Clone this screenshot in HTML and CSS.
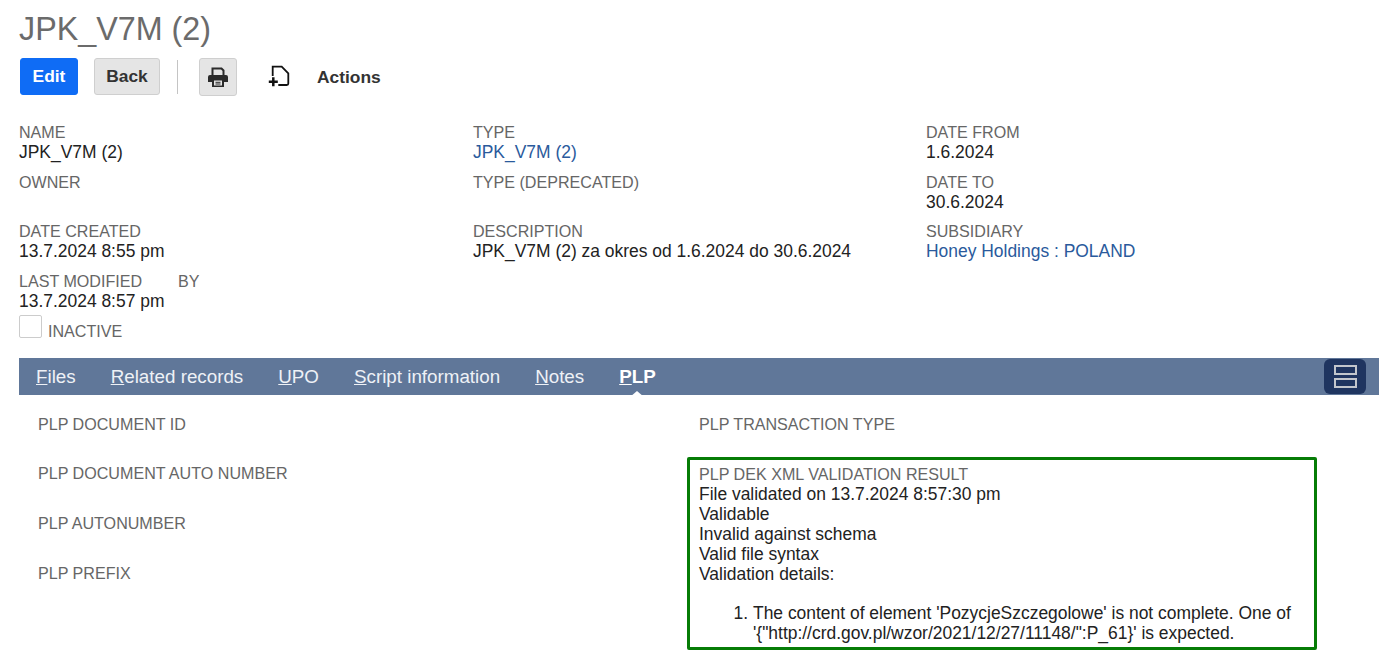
FILE: index.html
```html
<!DOCTYPE html>
<html lang="pl">
<head>
<meta charset="UTF-8" />
<meta name="viewport" content="width=device-width, initial-scale=1" />
<title>JPK_V7M (2)</title>
<link rel="stylesheet" href="styles.css">
</head>
<body>
<div class="page">
  <h1 class="title">JPK_V7M (2)</h1>

  <div class="toolbar">
    <button type="button" class="btn btn-primary">Edit</button>
    <button type="button" class="btn btn-back">Back</button>
    <span class="divider"></span>
    <button type="button" class="btn btn-icon" aria-label="Print">
      <svg width="22" height="22" viewBox="0 0 22 22">
        <path d="M5.500 9V2.500H14.500L16.500 4.500V9" fill="none" stroke="#2b2b2b" stroke-width="2"/>
        <path d="M1 11a2 2 0 0 1 2-2H19a2 2 0 0 1 2 2V16H17V13H5V16H1Z" fill="#2b2b2b"/>
        <path d="M5 13H17V21H5Z" fill="#2b2b2b"/>
        <path d="M7 14.500H15V19.500H7Z" fill="#e5e5e5"/>
        <path d="M8.500 16.300H13.500M8.500 18H13.500" stroke="#2b2b2b" stroke-width="1"/>
      </svg>
    </button>
    <span class="add-file">
      <svg width="24" height="26" viewBox="0 0 24 26">
        <path d="M5.700 12V2.700H14.700L21.300 9.300V19.500Q21.300 21 19.800 21H11.300" fill="none" stroke="#111" stroke-width="1.800"/>
        <path d="M1.800 17.700H10.800M6.300 13.200V22.200" fill="none" stroke="#111" stroke-width="2.500"/>
      </svg>
    </span>
    <span class="actions">Actions</span>
  </div>

  <div class="fields">
    <div class="field-col">
      <div class="field">
        <div class="label">NAME</div>
        <div class="value">JPK_V7M (2)</div>
      </div>
      <div class="field">
        <div class="label">OWNER</div>
        <div class="value"></div>
      </div>
      <div class="field">
        <div class="label">DATE CREATED</div>
        <div class="value">13.7.2024 8:55 pm</div>
      </div>
      <div class="field">
        <div class="label label-pair"><span>LAST MODIFIED</span><span>BY</span></div>
        <div class="value">13.7.2024 8:57 pm</div>
      </div>
      <div class="check-row">
        <span class="checkbox"></span>
        <span class="label">INACTIVE</span>
      </div>
    </div>
    <div class="field-col">
      <div class="field">
        <div class="label">TYPE</div>
        <div class="value"><a href="#">JPK_V7M (2)</a></div>
      </div>
      <div class="field">
        <div class="label">TYPE (DEPRECATED)</div>
        <div class="value"></div>
      </div>
      <div class="field">
        <div class="label">DESCRIPTION</div>
        <div class="value">JPK_V7M (2) za okres od 1.6.2024 do 30.6.2024</div>
      </div>
    </div>
    <div class="field-col">
      <div class="field">
        <div class="label">DATE FROM</div>
        <div class="value">1.6.2024</div>
      </div>
      <div class="field">
        <div class="label">DATE TO</div>
        <div class="value">30.6.2024</div>
      </div>
      <div class="field">
        <div class="label">SUBSIDIARY</div>
        <div class="value"><a href="#">Honey Holdings : POLAND</a></div>
      </div>
    </div>
  </div>

  <div class="tabs">
    <a class="tab" href="#"><u>F</u>iles</a>
    <a class="tab" href="#"><u>R</u>elated records</a>
    <a class="tab" href="#"><u>U</u>PO</a>
    <a class="tab" href="#"><u>S</u>cript information</a>
    <a class="tab" href="#"><u>N</u>otes</a>
    <a class="tab active" href="#"><u>P</u>LP</a>
    <button type="button" class="view-toggle" aria-label="Toggle view">
      <span></span>
      <span></span>
    </button>
  </div>

  <div class="panel">
    <div class="panel-col">
      <div class="label panel-field">PLP DOCUMENT ID</div>
      <div class="label panel-field">PLP DOCUMENT AUTO NUMBER</div>
      <div class="label panel-field">PLP AUTONUMBER</div>
      <div class="label panel-field">PLP PREFIX</div>
    </div>
    <div class="panel-col panel-right">
      <div class="label panel-field">PLP TRANSACTION TYPE</div>
      <div class="result">
        <div class="label">PLP DEK XML VALIDATION RESULT</div>
        <div class="value">File validated on 13.7.2024 8:57:30 pm</div>
        <div class="value">Validable</div>
        <div class="value">Invalid against schema</div>
        <div class="value">Valid file syntax</div>
        <div class="value">Validation details:</div>
        <ol class="details">
          <li>The content of element 'PozycjeSzczegolowe' is not complete. One of '{"http://crd.gov.pl/wzor/2021/12/27/11148/":P_61}' is expected.</li>
        </ol>
      </div>
    </div>
  </div>
</div>
</body>
</html>
```

FILE: styles.css
```css
body {
  margin: 0; padding: 0;
  font-family: "Liberation Sans", Arial, sans-serif;
  background: #fff;
  color: #222;
}
a {
  color: #2a5a9c;
  text-decoration: none;
}
.page {
  padding: 1px 11px 0 19px;
}
.title {
  margin: 0;
  font-size: 32.3px;
  font-weight: normal;
  line-height: 57px;
  color: #6b6b6b;
}

/* toolbar */
.toolbar {
  display: flex;
  align-items: center;
  height: 38px;
  padding-left: 1px;
}
.btn {
  height: 37px;
  padding: 0;
  border-radius: 3px;
  font-family: inherit;
  font-size: 17.4px;
  font-weight: bold;
  cursor: pointer;
}
.btn-primary {
  align-self: flex-start;
  width: 58px;
  border: 1px solid #0f6cf5;
  background: #0f6cf5;
  color: #fff;
}
.btn-back {
  align-self: flex-start;
  width: 66px;
  margin-left: 16px;
  border: 1px solid #cfcfcf;
  background: #e5e5e5;
  color: #333;
}
.divider {
  width: 1px;
  height: 34px;
  margin-left: 17px;
  background: #c4c4c4;
}
.btn-icon {
  display: flex;
  align-items: center;
  justify-content: center;
  width: 38px;
  height: 38px;
  margin-left: 21px;
  border: 1px solid #cfcfcf;
  background: #e5e5e5;
}
.add-file {
  display: flex;
  margin-left: 30px;
}
.actions {
  margin-left: 26px;
  font-size: 17.4px;
  font-weight: bold;
  color: #333;
}

/* main fields */
.fields {
  display: grid;
  grid-template-columns: 454px 453px 1fr;
  margin-top: 26px;
}
.field {
  height: 49.67px;
}
.label {
  font-size: 16.1px;
  line-height: 20px;
  color: #666;
}
.label-pair {
  display: flex;
  gap: 36px;
}
.value {
  font-size: 17.45px;
  line-height: 20px;
  color: #222;
}
.check-row {
  display: flex;
  align-items: flex-end;
  gap: 6px;
  margin-top: -6px;
}
.checkbox {
  width: 21px;
  height: 21px;
  border: 1px solid #ccc;
  border-radius: 2px;
  background: #fff;
}
.check-row .label {
  margin-bottom: -3px;
}

/* tabs */
.tabs {
  display: flex;
  align-items: center;
  gap: 35px;
  height: 37px;
  margin-top: 20px;
  padding-left: 17px;
  background: #607799;
}
.tab {
  position: relative;
  padding-top: 2px;
  font-size: 18.8px;
  color: #eef1f6;
}
.tab.active {
  font-weight: bold;
  color: #fff;
}
.tab.active::after {
  content: "";
  position: absolute;
  left: 50%;
  bottom: -9px;
  margin-left: -7px;
  border-left: 7px solid transparent;
  border-right: 7px solid transparent;
  border-bottom: 6px solid #fff;
}
.view-toggle {
  display: flex;
  flex-direction: column;
  align-items: center;
  justify-content: center;
  gap: 3px;
  width: 42px;
  height: 35px;
  margin-left: auto;
  margin-right: 13px;
  padding: 0;
  border: none;
  border-radius: 6px;
  background: #1f3560;
  cursor: pointer;
}
.view-toggle span {
  box-sizing: border-box;
  width: 23px;
  height: 10px;
  border: 2px solid #c2c6cc;
}

/* plp panel */
.panel {
  display: grid;
  grid-template-columns: 649px 630px;
  padding: 19px 0 0 19px;
}
.panel-field {
  height: 49.67px;
}
.panel-right .panel-field {
  height: 43px;
  padding-left: 12px;
}
.result {
  height: 183px;
  padding: 4px 0 0 9px;
  border: 3px solid #067c06;
  border-radius: 2px;
}
.details {
  margin: 19px 0 0;
  padding: 0 0 0 54px;
  font-size: 17.45px;
  line-height: 20px;
  color: #222;
}
```
